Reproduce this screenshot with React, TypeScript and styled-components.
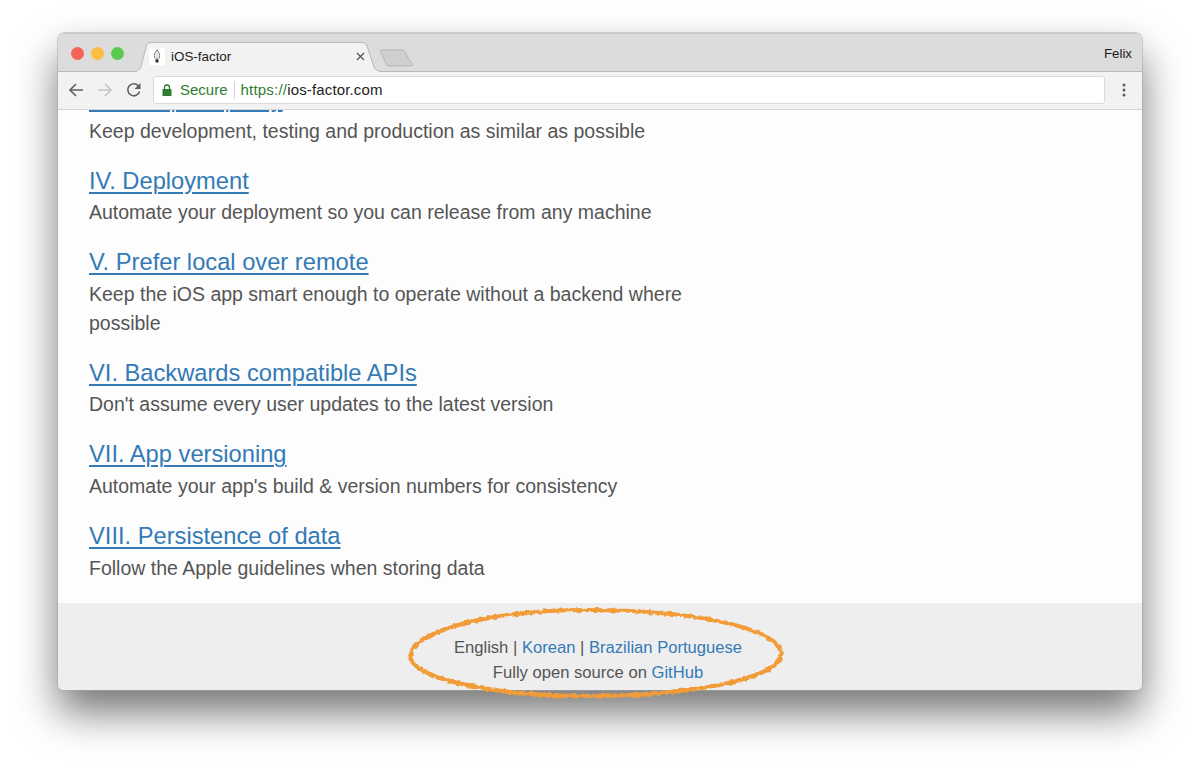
import { ReactElement } from 'react'
import styled, { createGlobalStyle } from 'styled-components'

const GlobalStyle = createGlobalStyle`
  html, body {
    margin: 0;
    padding: 0;
    background: #fff;
  }
`

const Page = styled.div`
  box-sizing: border-box;
  width: 1200px;
  height: 773px;
  padding: 33px 58px 83px;
  overflow: hidden;
  font-family: 'Liberation Sans', Arial, sans-serif;
`

const WindowShadow = styled.div`
  position: relative;
  height: 100%;
  border-radius: 6px;
  box-shadow: 0 22px 42px rgba(0, 0, 0, 0.55);
`

const Window = styled.div`
  display: flex;
  flex-direction: column;
  height: 657px;
  border-radius: 6px 6px 5px 5px;
  overflow: hidden;
  box-shadow: 0 0 0 0.5px #a8a8a8;
`

const TitleBar = styled.div`
  position: relative;
  z-index: 1;
  display: flex;
  align-items: flex-end;
  flex: 0 0 38px;
  background: #dcdcdc;
  border-top: 1px solid #c9c9c9;
  box-sizing: border-box;
`

const Lights = styled.div`
  display: flex;
  gap: 7px;
  align-self: flex-start;
  padding: 13px 0 0 13px;
`

const Light = styled.span<{ $color: string }>`
  width: 13px;
  height: 13px;
  border-radius: 50%;
  background: ${({ $color }) => $color};
`

const Tab = styled.div`
  position: relative;
  display: flex;
  align-items: center;
  box-sizing: border-box;
  width: 250px;
  height: 30px;
  margin: 0 0 -1px 9px;
  padding: 0 16px 1px 16px;
`

const TabShape = styled.svg`
  position: absolute;
  left: 0;
  top: 0;
`

const Favicon = styled.span`
  position: relative;
  display: flex;
  align-items: center;
  justify-content: center;
  width: 16px;
  height: 17px;
  background: #fff;
`

const TabTitle = styled.span`
  position: relative;
  margin-left: 6px;
  font-size: 13.4px;
  color: #222;
  flex: 1;
`

const TabClose = styled.svg`
  position: relative;
  margin-right: 2px;
`

const NewTab = styled.svg`
  margin: 0 0 4px -4px;
`

const UserName = styled.span`
  position: absolute;
  right: 10px;
  top: 12px;
  font-size: 13.3px;
  color: #1c1c1c;
`

const Toolbar = styled.div`
  display: flex;
  align-items: center;
  flex: 0 0 39px;
  box-sizing: border-box;
  padding: 0 16px 2px 10px;
  background: #f2f2f2;
  border-top: 1px solid #b8b8b8;
  border-bottom: 1px solid #d6d6d6;
`

const NavButton = styled.svg`
  flex: none;
  margin-right: 13px;
`

const Omnibox = styled.div`
  display: flex;
  align-items: center;
  flex: 1;
  box-sizing: border-box;
  height: 28px;
  margin: 0 17px 0 -2px;
  padding-left: 8px;
  background: #fff;
  border: 1px solid #d9d9d9;
  border-radius: 3px;
  font-size: 15px;
`

const SecureLabel = styled.span`
  margin-left: 8px;
  padding-right: 6px;
  line-height: 18px;
  color: #2d7d32;
  border-right: 1px solid #d4d4d4;
`

const Scheme = styled.span`
  margin-left: 6px;
  letter-spacing: 0.2px;
  color: #2d7d32;
`

const Host = styled.span`
  letter-spacing: 0.15px;
  color: #222;
`

const Content = styled.div`
  flex: 1;
  overflow: hidden;
  background: #fdfdfd;
  min-height: 0;
`

const List = styled.div`
  display: flex;
  flex-direction: column;
  gap: 15px;
  width: 610px;
  margin-top: -31px;
  padding-left: 31px;
`

const Item = styled.section`
  display: flex;
  flex-direction: column;
`

const HeadingRow = styled.div`
  height: 37.6px;
  line-height: 40.6px;
`

const Heading = styled.a`
  font-size: 23.7px;
  color: #337ab7;
  text-decoration: underline;
  text-decoration-thickness: 1.5px;
  text-underline-offset: 2.5px;
`

const Summary = styled.p`
  margin: 0;
  font-size: 19.5px;
  line-height: 29px;
  color: #555;
`

const Footer = styled.footer`
  flex: 0 0 87px;
  box-sizing: border-box;
  padding: 32px 4px 0 0;
  background: #eee;
  text-align: center;
  font-size: 16.6px;
  line-height: 25px;
  color: #555;
`

const FooterLink = styled.a`
  color: #337ab7;
`

const Scribble = styled.svg`
  position: absolute;
  left: 340px;
  top: 568px;
  pointer-events: none;
`

const items = [
  { title: 'III. Dev/prod parity', text: 'Keep development, testing and production as similar as possible' },
  { title: 'IV. Deployment', text: 'Automate your deployment so you can release from any machine' },
  { title: 'V. Prefer local over remote', text: 'Keep the iOS app smart enough to operate without a backend where possible' },
  { title: 'VI. Backwards compatible APIs', text: "Don't assume every user updates to the latest version" },
  { title: 'VII. App versioning', text: "Automate your app's build & version numbers for consistency" },
  { title: 'VIII. Persistence of data', text: 'Follow the Apple guidelines when storing data' }
]

const App = (): ReactElement => {
  return (
    <Page>
      <GlobalStyle />
      <WindowShadow>
        <Window>
          <TitleBar>
            <Lights>
              <Light $color="#f4625a" />
              <Light $color="#fdbd41" />
              <Light $color="#5ac94f" />
            </Lights>
            <Tab>
              <TabShape width="250" height="30" viewBox="0 0 250 30">
                <path
                  d="M0 29.5 C5 29.5 7 28 8 25 L13 5 C13.8 2 15 0.5 18 0.5 L229 0.5 C232 0.5 233.2 2 234 4 L241 25 C242 28 244 29.5 250 29.5"
                  fill="#f2f2f2"
                  stroke="#b8b8b8"
                />
                <rect x="4" y="29" width="242" height="1" fill="#f2f2f2" />
              </TabShape>
              <Favicon>
                <svg width="10" height="15" viewBox="0 0 10 15">
                  <path d="M5 0.8 C7.5 4 8 6 7.4 8 C7 9.8 6 10.5 5 10.5 C4 10.5 3 9.8 2.6 8 C2 6 2.5 4 5 0.8 Z" fill="none" stroke="#777" />
                  <path d="M5 3.5 L5 10" stroke="#999" strokeWidth="0.7" />
                  <circle cx="5" cy="12" r="1.7" fill="#333" />
                </svg>
              </Favicon>
              <TabTitle>iOS-factor</TabTitle>
              <TabClose width="9" height="9" viewBox="0 0 9 9">
                <path d="M1 1 L8 8 M8 1 L1 8" stroke="#555" strokeWidth="1.2" />
              </TabClose>
            </Tab>
            <NewTab width="36" height="18" viewBox="0 0 36 18">
              <path d="M2.5 1 L23 1 C24.5 1 25 1.5 25.5 2.5 L33 15 C33.6 16.2 33 17 32 17 L10 17 C8.5 17 8 16.5 7.5 15.5 L1.5 2.5 C1 1.5 1.5 1 2.5 1 Z" fill="#cfcfcf" stroke="#b5b5b5" />
            </NewTab>
            <UserName>Felix</UserName>
          </TitleBar>
          <Toolbar>
            <NavButton width="16" height="16" viewBox="0 0 16 16">
              <path d="M15 8 L2 8 M8 2 L2 8 L8 14" fill="none" stroke="#5f5f5f" strokeWidth="1.6" />
            </NavButton>
            <NavButton width="16" height="16" viewBox="0 0 16 16">
              <path d="M1 8 L14 8 M8 2 L14 8 L8 14" fill="none" stroke="#c6c6c6" strokeWidth="1.6" />
            </NavButton>
            <NavButton width="16" height="16" viewBox="0 0 16 16">
              <path d="M13.6 9.5 A6 6 0 1 1 12.4 3.9" fill="none" stroke="#5f5f5f" strokeWidth="1.6" />
              <path d="M14.5 1 L14.5 7 L8.5 7 Z" fill="#5f5f5f" />
            </NavButton>
            <Omnibox>
              <svg width="10" height="12" viewBox="0 0 10 12">
                <path d="M2.5 5 L2.5 3.5 A2.5 2.5 0 0 1 7.5 3.5 L7.5 5" fill="none" stroke="#2d7d32" strokeWidth="1.3" />
                <rect x="0.5" y="5" width="9" height="7" fill="#2d7d32" />
              </svg>
              <SecureLabel>Secure</SecureLabel>
              <Scheme>https://</Scheme>
              <Host>ios-factor.com</Host>
            </Omnibox>
            <svg width="4" height="14" viewBox="0 0 4 14">
              <circle cx="2" cy="2" r="1.5" fill="#5f5f5f" />
              <circle cx="2" cy="7" r="1.5" fill="#5f5f5f" />
              <circle cx="2" cy="12" r="1.5" fill="#5f5f5f" />
            </svg>
          </Toolbar>
          <Content>
            <List>
              {items.map(item => (
                <Item key={item.title}>
                  <HeadingRow>
                    <Heading href="#">{item.title}</Heading>
                  </HeadingRow>
                  <Summary>{item.text}</Summary>
                </Item>
              ))}
            </List>
          </Content>
          <Footer>
            <div>
              English | <FooterLink>Korean</FooterLink> | <FooterLink>Brazilian Portuguese</FooterLink>
            </div>
            <div>
              Fully open source on <FooterLink>GitHub</FooterLink>
            </div>
          </Footer>
        </Window>
        <Scribble width="400" height="110" viewBox="0 0 400 110">
          <defs>
            <filter id="rough" x="-5%" y="-10%" width="110%" height="120%">
              <feTurbulence type="fractalNoise" baseFrequency="0.22" numOctaves="3" seed="4" />
              <feDisplacementMap in="SourceGraphic" scale="4" xChannelSelector="R" yChannelSelector="G" />
            </filter>
          </defs>
          <path
            d="M13 51 C24 28 96 9 190 9 C290 9 380 26 383 52 C385 78 290 95 190 95 C92 95 4 76 13 51 Z"
            fill="none"
            stroke="#f19c38"
            strokeWidth="4.2"
            filter="url(#rough)"
          />
        </Scribble>
      </WindowShadow>
    </Page>
  )
}

export default App
